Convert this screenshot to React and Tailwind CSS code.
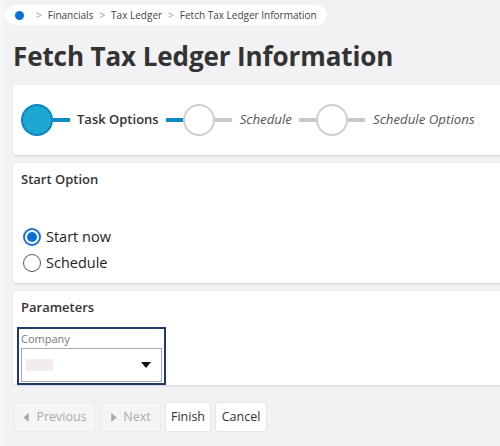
import { useState } from "react";

const Line = ({ active }) => (
  <div className={`h-[4px] w-[17px] ${active ? "bg-[#0b8ac4]" : "bg-[#c8c8c8]"}`} />
);

const Circle = ({ active }) => (
  <div
    className={`w-[32px] h-[32px] rounded-full box-border ${
      active ? "bg-[#1ea7d4] border-2 border-[#0b86c0]" : "bg-white border-2 border-[#cdcdcd]"
    }`}
  />
);

const Radio = ({ checked, label, onClick }) => (
  <button onClick={onClick} className="flex items-center gap-[5px] h-[26px] text-[14.5px] text-[#222]">
    <span
      className={`w-[18px] h-[18px] rounded-full flex items-center justify-center box-border ${
        checked ? "border-2 border-[#1a73d6]" : "border border-[#555]"
      }`}
    >
      {checked && <span className="w-[10px] h-[10px] rounded-full bg-[#0b6fd6]" />}
    </span>
    {label}
  </button>
);

const Caret = () => (
  <svg width="7" height="9" viewBox="0 0 7 10" className="fill-current">
    <path d="M6 0 L0 5 L6 10 Z" />
  </svg>
);

export default function App() {
  const [start, setStart] = useState("now");

  return (
    <div
      className="w-[500px] h-[446px] bg-[#f2f1f3] border-l-[4px] border-[#f7f7f8] overflow-hidden text-[#333]"
      style={{ fontFamily: '"Open Sans", "Liberation Sans", sans-serif' }}
    >
      {/* Breadcrumb */}
      <div className="pt-[5px] pl-[1px]">
        <div className="flex items-center whitespace-nowrap w-[322px] h-[20px] bg-white rounded-full text-[10px] text-[#444] pl-[10px]">
          <span className="shrink-0 w-[9px] h-[9px] rounded-full bg-[#0a6fd8]" />
          <span className="ml-[12px] mr-[6px] text-[#999] text-[10px]">&gt;</span>
          <span>Financials</span>
          <span className="mx-[6px] text-[#999] text-[10px]">&gt;</span>
          <span>Tax Ledger</span>
          <span className="mx-[6px] text-[#999] text-[10px]">&gt;</span>
          <span>Fetch Tax Ledger Information</span>
        </div>
      </div>

      {/* Title */}
      <h1 className="ml-[9px] mt-[13px] text-[26px] leading-[36px] font-bold text-[#333] tracking-[-0.1px]">
        Fetch Tax Ledger Information
      </h1>

      <div className="ml-[9px] mt-[11px] flex flex-col gap-[8px]">
        {/* Steps */}
        <div className="h-[70px] w-[520px] bg-white rounded-[4px] shadow-[0_1px_2px_rgba(0,0,0,0.12)] flex items-center pl-[8px]">
          <Circle active />
          <Line active />
          <span className="mx-[7px] text-[13px] font-semibold text-[#333]">Task Options</span>
          <Line active />
          <Circle />
          <Line />
          <span className="ml-[8px] mr-[7px] text-[13.3px] italic text-[#555]">Schedule</span>
          <Line />
          <Circle />
          <Line />
          <span className="mx-[8px] text-[13.3px] italic text-[#555]">Schedule Options</span>
        </div>

        {/* Start option */}
        <div className="h-[120px] w-[520px] bg-white rounded-[4px] shadow-[0_1px_2px_rgba(0,0,0,0.12)] px-[8px] pt-[7px]">
          <div className="text-[13px] font-semibold text-[#333] leading-[18px]">Start Option</div>
          <div className="mt-[36px] ml-[2px] flex flex-col">
            <Radio checked={start === "now"} label="Start now" onClick={() => setStart("now")} />
            <Radio checked={start === "schedule"} label="Schedule" onClick={() => setStart("schedule")} />
          </div>
        </div>

        {/* Parameters */}
        <div className="h-[94px] w-[520px] bg-white rounded-[4px] shadow-[0_1px_2px_rgba(0,0,0,0.12)] pl-[4px] pt-[7px]">
          <div className="pl-[4px] text-[13px] font-semibold text-[#333] leading-[18px]">Parameters</div>
          <div className="mt-[11px] w-[149px] h-[58px] border-2 border-[#1d3a6b] px-[2px] pt-[2px]">
            <div className="text-[11px] text-[#777] leading-[15px]">Company</div>
            <div className="mt-[2px] h-[34px] border border-[#a9a9a9] flex items-center justify-between pl-[4px] pr-[10px]">
              <span className="w-[27px] h-[12px] bg-[#f3ecec]" />
              <svg width="10" height="6" viewBox="0 0 10 6">
                <path d="M0 0 H10 L5 6 Z" fill="#111" />
              </svg>
            </div>
          </div>
        </div>
      </div>

      {/* Buttons */}
      <div className="ml-[10px] mt-[17px] flex gap-[4px] text-[12.5px]">
        <button className="h-[30px] w-[82px] rounded-[3px] bg-[#f5f5f6] border border-[#ebebec] text-[#aaa] flex items-center justify-center gap-[6px]">
          <span className="text-[#aaa]"><Caret /></span>
          Previous
        </button>
        <button className="h-[30px] w-[61px] rounded-[3px] bg-[#f5f5f6] border border-[#ebebec] text-[#aaa] flex items-center justify-center gap-[6px]">
          <span className="text-[#aaa] rotate-180"><Caret /></span>
          Next
        </button>
        <button className="h-[30px] w-[46px] rounded-[3px] bg-white border border-[#e6e6e8] text-[#333]">
          Finish
        </button>
        <button className="h-[30px] w-[52px] rounded-[3px] bg-white border border-[#e6e6e8] text-[#333]">
          Cancel
        </button>
      </div>
    </div>
  );
}
